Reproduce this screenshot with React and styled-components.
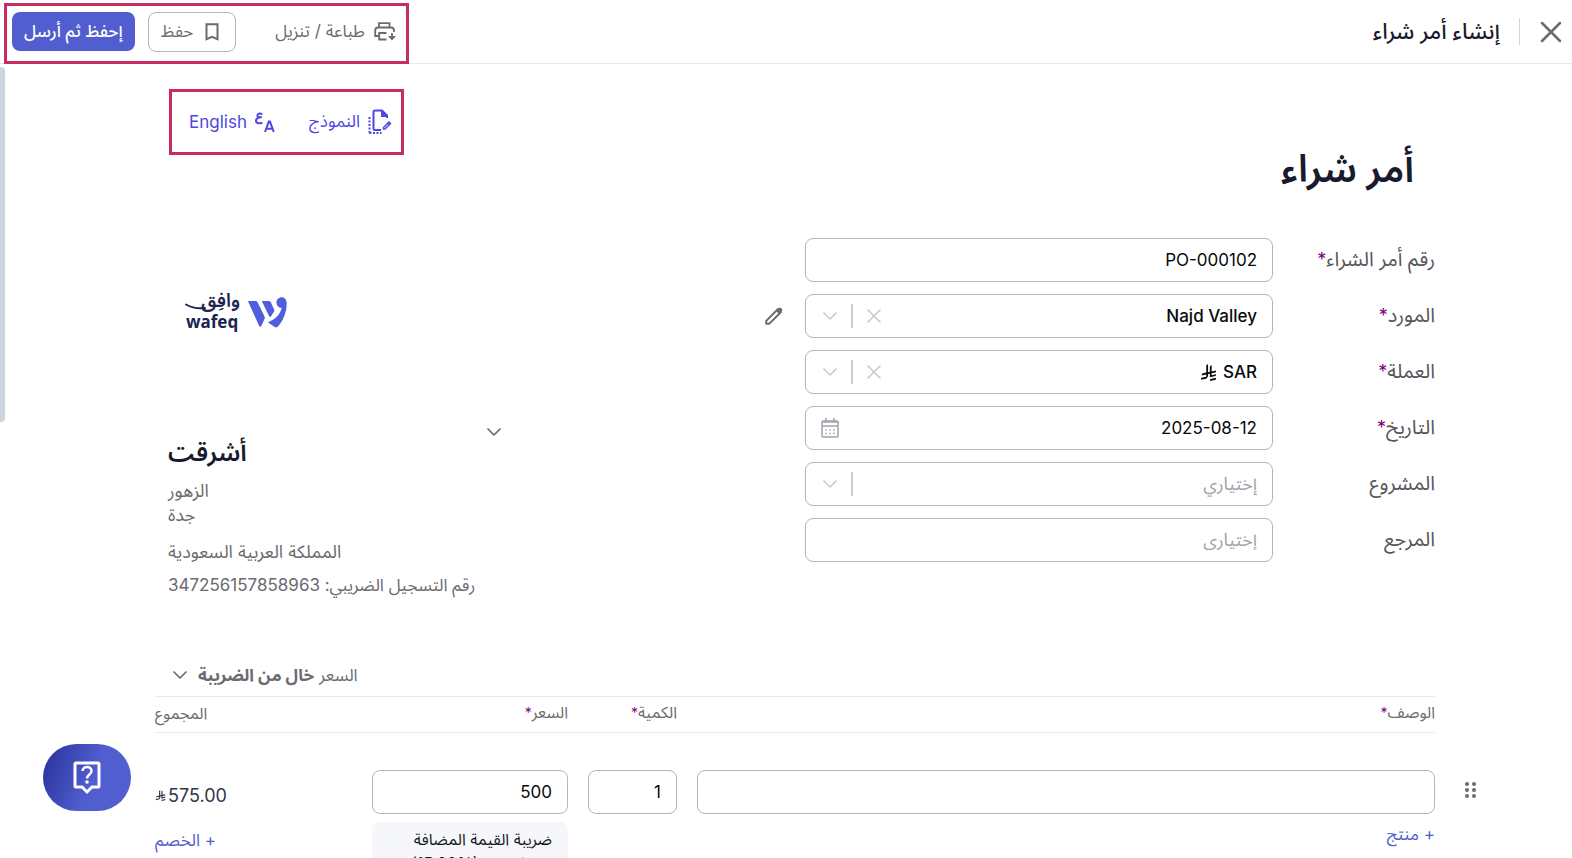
import React from 'react';
import styled, { createGlobalStyle } from 'styled-components';
import { X, ChevronDown } from 'lucide-react';

const GlobalStyle = createGlobalStyle`
  *, *::before, *::after {
    box-sizing: border-box;
  }

  body {
    margin: 0;
    background: #ffffff;
    color: #6b6b70;
    font-family: Inter, "Noto Sans Arabic", "Noto Sans", "DejaVu Sans", sans-serif;
    font-size: 16px;
  }

  button, input, select {
    font: inherit;
    color: inherit;
  }

  button {
    cursor: pointer;
  }
`;

const Screen = styled.div`
  height: 100vh;
  display: flex;
  flex-direction: column;
  overflow: hidden;
`;

// Top bar
const TopBar = styled.header`
  flex: none;
  display: flex;
  align-items: center;
  justify-content: space-between;
  height: 64px;
  padding: 0 3px 0 4px;
  border-bottom: 1px solid #e5e7eb;
`;

const TitleGroup = styled.div`
  display: flex;
  align-items: center;
  gap: 13px;
`;

const IconButton = styled.button`
  display: inline-flex;
  align-items: center;
  justify-content: center;
  padding: 0;
  border: none;
  background: none;
  color: ${({ $color }) => $color || '#6b6b70'};
`;

const Separator = styled.span`
  width: 1px;
  height: 27px;
  background: #d4d4d8;
`;

const PageTitle = styled.h1`
  margin: 0 6px 2px 0;
  font-size: 22px;
  line-height: 32px;
  font-weight: 500;
  color: #1a1a2e;
`;

const Highlight = styled.div`
  display: flex;
  align-items: center;
  border: 3px solid #c72c62;
`;

const TopActions = styled(Highlight)`
  gap: 13px;
  height: 61px;
  margin: 3px 0 -1px;
  padding: 0 10px 4px 5px;
`;

const TextButton = styled.button`
  display: inline-flex;
  align-items: center;
  gap: ${({ $gap }) => $gap || '8px'};
  padding: 0;
  border: none;
  background: none;
  font-size: 17px;
  color: ${({ $color }) => $color || '#6b6b70'};
`;

const PrintButton = styled(TextButton)`
  margin-left: 26px;
`;

const OutlineButton = styled(TextButton)`
  gap: 12px;
  height: 40px;
  padding: 0 16px 0 12px;
  border: 1px solid #b4b4be;
  border-radius: 8px;
`;

const PrimaryButton = styled.button`
  height: 39px;
  padding: 0 12px;
  border: none;
  border-radius: 8px;
  background: #505ecf;
  color: #ffffff;
  font-size: 17px;
  font-weight: 500;
`;

// Document
const Page = styled.main`
  flex: 1;
  overflow: hidden;
  padding: 25px 90px 0 155px;
`;

const DocumentTop = styled.div`
  display: flex;
  justify-content: space-between;
  align-items: flex-start;
  height: 149px;
  padding: 0 47px 0 14px;
`;

const DocumentTitle = styled.h2`
  margin: 47px 21px 0 0;
  font-size: 38px;
  line-height: 64px;
  font-weight: 600;
  color: #1a1a2e;
`;

const DocumentActions = styled(Highlight)`
  gap: 34px;
  height: 66px;
  padding: 0 9px 0 17px;
`;

const Columns = styled.div`
  display: flex;
  justify-content: space-between;
  padding: 0 47px 0 13px;
`;

const Form = styled.form`
  display: grid;
  gap: 12px;
  align-content: start;
`;

const FormRow = styled.div`
  display: grid;
  grid-template-columns: 162px 468px 40px;
  align-items: center;
  height: 44px;
`;

const Label = styled.label`
  font-size: 20px;
  color: #55555c;
`;

const Star = styled.span`
  font-size: ${({ $small }) => ($small ? '14px' : '18px')};
  color: #800080;
`;

const Control = styled.div`
  display: flex;
  align-items: center;
  height: 44px;
  padding: 0 15px 0 12px;
  border: 1px solid #b4b4be;
  border-radius: 8px;
  background: #ffffff;
  color: #09090b;
`;

const Field = styled.input`
  flex: 1;
  min-width: 0;
  width: 100%;
  padding: 0;
  border: none;
  outline: none;
  background: none;
  font-size: 17px;
  text-align: right;

  &::placeholder {
    color: #a1a1aa;
    font-size: 18px;
    opacity: 1;
  }
`;

const Choice = styled.select`
  flex: ${({ $fit }) => ($fit ? 'none' : 1)};
  field-sizing: ${({ $fit }) => ($fit ? 'content' : 'fixed')};
  min-width: 0;
  height: 40px;
  margin-left: ${({ $fit }) => ($fit ? '6px' : 0)};
  padding: 0;
  border: none;
  outline: none;
  background: none;
  appearance: none;
  font-size: ${({ $empty }) => ($empty ? '18px' : '17px')};
  line-height: 36px;
  font-weight: ${({ $empty }) => ($empty ? 400 : 500)};
  color: ${({ $empty }) => ($empty ? '#a1a1aa' : 'inherit')};
`;

const ControlEnd = styled.div`
  display: flex;
  align-items: center;
  gap: 9px;
  margin-right: auto;
  color: #cccccc;
`;

const ControlDivider = styled.span`
  width: 2px;
  height: 24px;
  background: #cccccc;
`;

const DateButton = styled(IconButton)`
  width: 24px;
`;

const EditButton = styled(IconButton)`
  justify-self: end;
`;

// Company
const Company = styled.section`
  display: flex;
  flex-direction: column;
  align-items: flex-start;
  direction: ltr;
  width: 338px;
`;

const Logo = styled.div`
  display: flex;
  align-items: center;
  gap: 8px;
  height: 60px;
  margin: 44px 0 0 18px;
`;

const CompanyBar = styled.div`
  align-self: stretch;
  display: flex;
  justify-content: flex-end;
  height: 20px;
  margin-top: 80px;
`;

const CompanyName = styled.h3`
  margin: 0;
  font-size: 25px;
  line-height: 20px;
  font-weight: 600;
  color: #1a1a2e;
`;

const CompanyLine = styled.p`
  margin: ${({ $gap }) => $gap || '0'} 0 0;
  font-size: ${({ $size }) => $size || '18px'};
  line-height: 24px;
  white-space: nowrap;
`;

// Items
const TaxMode = styled.div`
  display: flex;
  justify-content: flex-end;
  align-items: flex-start;
  height: 33px;
  margin-top: 66px;
  padding-left: 13px;
`;

const TaxWord = styled.span`
  line-height: 24px;
`;

const Items = styled.table`
  width: 100%;
  table-layout: fixed;
  border-collapse: collapse;
`;

const HeadCell = styled.th`
  height: 36px;
  padding: 0 0 4px ${({ $end }) => ($end ? 0 : '20px')};
  border-top: 1px solid #e9e9ec;
  border-bottom: 1px solid #e9e9ec;
  font-weight: 400;
  line-height: 24px;
  text-align: ${({ $end }) => ($end ? 'left' : 'right')};
`;

const Corner = styled.td`
  padding: 0;
`;

const Cell = styled.td`
  padding: 37px 0 0 ${({ $end }) => ($end ? 0 : '20px')};
  vertical-align: top;
`;

const HandleCell = styled.td`
  padding: 49px 6px 0 0;
  vertical-align: top;
`;

const Total = styled.div`
  direction: ltr;
  display: flex;
  align-items: center;
  gap: 2px;
  height: 50px;
  font-size: 18px;
  color: #34344a;
`;

const LinkButton = styled.button`
  display: block;
  margin: 8px 0 0;
  padding: 0;
  border: none;
  background: none;
  font-size: 17px;
  line-height: 24px;
  color: #505ecf;
`;

const DiscountButton = styled(LinkButton)`
  margin-right: auto;
`;

const TaxTag = styled.div`
  margin-top: 8px;
  padding: 5px 16px;
  border-radius: 8px;
  background: #f6f7fb;
  font-size: 16px;
  line-height: 24px;
  color: #18181b;
`;

const ScrollThumb = styled.div`
  position: fixed;
  left: 0;
  top: 67px;
  width: 5px;
  height: 355px;
  border-radius: 0 4px 4px 0;
  background: #cbd5e1;
`;

const HelpButton = styled.button`
  position: fixed;
  left: 43px;
  bottom: 47px;
  display: flex;
  align-items: center;
  justify-content: center;
  width: 88px;
  height: 67px;
  border: none;
  border-radius: 34px;
  background: linear-gradient(110deg, #27309a 0%, #505ecf 55%);
  color: #ffffff;
`;

const PrintIcon = () => (
  <svg width="22" height="19" viewBox="0 0 22 19" fill="none" stroke="currentColor" strokeWidth="1.8">
    <path d="M5 5V1.200h10.500V5M5 14H1.200V8.500A3 3 0 0 1 4 5.500h13a3 3 0 0 1 3 3V10M12.500 11H5.200v6.500h7.300M18 11v4" />
    <path d="M14 14h8l-4 4.500z" fill="currentColor" stroke="none" />
  </svg>
);

const BookmarkIcon = () => (
  <svg width="14" height="18" viewBox="0 0 14 18" fill="none" stroke="currentColor" strokeWidth="2">
    <path d="M1.500 1.200h11v15L7 13.800l-5.500 2.400z" />
  </svg>
);

const TemplateIcon = () => (
  <svg width="24" height="26" viewBox="0 0 24 26" fill="none" stroke="currentColor" strokeWidth="2">
    <path d="M13 21H7a1.500 1.500 0 0 1-1.500-1.500V3A1.500 1.500 0 0 1 7 1.500h7l5 5V9" />
    <path d="M13 1l7 7h-7z" fill="currentColor" stroke="none" />
    <path d="M1.500 8v16M1.500 24h12" strokeDasharray="2 1.500" />
    <path d="M15.500 18.500l4.500-4.500 1.500 1.500-4.500 4.500h-1.500z" strokeWidth="1.500" />
    <path d="M19 14l2-2 2.500 2.500-2 2z" fill="currentColor" stroke="none" />
  </svg>
);

const LanguageIcon = () => (
  <svg width="20" height="21" viewBox="0 0 21 22" fill="none" stroke="currentColor" strokeWidth="2.1">
    <path d="M7.500 2.500C5 .8 2.500 2 2.500 3.800c0 1.500 1.800 2 4.500 1.500C3.500 5.800 1 7.300 1 9.200c0 2.600 3.800 3.400 6.800 2" />
    <path d="M10.500 21l4-11h1.200l4 11M12 17.500h6.200" />
  </svg>
);

const PencilIcon = () => (
  <svg width="18" height="18" viewBox="0 0 18 18" fill="none" stroke="currentColor" strokeWidth="1.900">
    <path d="M1.200 16.800v-3L13 2l3 3L4.200 16.800z" strokeLinejoin="round" />
    <path d="M11 4l3-3q1-1 2 0l1 1q1 1 0 2l-3 3z" fill="currentColor" stroke="none" />
  </svg>
);

const CalendarIcon = () => (
  <svg width="18" height="20" viewBox="0 0 18 20" fill="none" stroke="currentColor" strokeWidth="1.500">
    <rect x="1" y="3" width="16" height="16" rx="1" />
    <path d="M1 4h16M1 8h16M5 0v4M13 0v4" />
    <path d="M4.200 12h10M4.200 15.500h10" strokeDasharray="1.500 2.500" />
  </svg>
);

const RiyalIcon = ({ size }) => (
  <svg width={size} height={size} viewBox="0 0 1124 1256" fill="currentColor">
    <path d="M699.620 1113.020c-20.060 44.480-33.320 92.750-38.400 143.370l424.510-90.240c20.060-44.470 33.310-92.750 38.400-143.370l-424.510 90.240z" />
    <path d="M1085.730 895.800c20.060-44.470 33.320-92.750 38.400-143.370l-330.680 70.330v-135.200l292.270-62.110c20.060-44.470 33.320-92.750 38.400-143.370l-330.680 70.270V66.130c-50.670 28.450-95.670 66.320-132.250 110.990v403.350l-132.250 28.110V0c-50.670 28.440-95.670 66.320-132.250 110.990v525.690l-295.910 62.880c-20.060 44.470-33.330 92.750-38.420 143.370l334.330-71.050v170.260l-358.300 76.140c-20.060 44.470-33.320 92.750-38.400 143.370l375.040-79.700c30.530-6.350 56.770-24.400 73.830-49.240l68.780-101.970c7.140-10.550 11.300-23.270 11.300-36.970v-149.980l132.250-28.110v270.400l424.530-90.280z" />
  </svg>
);

const HelpIcon = () => (
  <svg width="28" height="34" viewBox="0 0 28 34" fill="none" stroke="currentColor" strokeWidth="3">
    <path d="M3 2h22q1 0 1 1v22q0 1-1 1h-6l-5 5-5-5H3q-1 0-1-1V3q0-1 1-1z" />
    <path d="M9.500 10c.3-5.500 9-5.500 9 0 0 3.500-4.500 3.500-4.500 7.500" strokeWidth="2.500" />
    <circle cx="14" cy="21" r="1.800" fill="currentColor" stroke="none" />
  </svg>
);

const HandleIcon = () => (
  <svg width="11" height="16" viewBox="0 0 11 16" fill="currentColor">
    {[2, 8, 14].map((y) => (
      <React.Fragment key={y}>
        <circle cx="2" cy={y} r="2" />
        <circle cx="9" cy={y} r="2" />
      </React.Fragment>
    ))}
  </svg>
);

const Words = styled.svg`
  overflow: visible;
  fill: #1c2450;
`;

const Wordmark = () => (
  <Words width="54" height="44" viewBox="0 0 54 44">
    <text x="54" y="17" direction="rtl" fontSize="19" fontWeight="600">وافِق</text>
    <path d="M0 14.500q9 5 19 3.500" fill="none" stroke="#1c2450" strokeWidth="2" strokeLinecap="round" />
    <text x="0" y="38" fontSize="17" fontWeight="700" fontFamily="'Noto Sans', sans-serif">wafeq</text>
  </Words>
);

const LogoMark = () => (
  <svg width="39" height="31" viewBox="294 82 118 92" fill="#505edd">
    <path d="M294 93h23q4 0 6 4l21 43q2 4 0 8l-10 21q-3 5-6 0L295 96z" />
    <path d="M336 93h21q4 0 6 4l10 22q1 3 0 5l-9 15q-3 4-6 0L337 96z" />
    <path d="M380 98c0-9 7-16 16-16s15 7 15 19c0 27-11 54-28 71q-4 3-8 0l-18-12q-3-3 2-5c18-6 32-21 37-41-9 0-16-7-16-16z" />
  </svg>
);

const SelectControl = ({ id, value, symbol, clearable, empty }) => (
  <Control>
    <Choice id={id} defaultValue={value} $fit={symbol} $empty={empty}>
      <option value={value}>{value}</option>
    </Choice>
    {symbol && <RiyalIcon size={17} />}
    <ControlEnd>
      {clearable && (
        <IconButton type="button" aria-label="مسح" $color="#cccccc">
          <X size={24} strokeWidth={1.7} />
        </IconButton>
      )}
      <ControlDivider />
      <ChevronDown size={24} strokeWidth={1.7} />
    </ControlEnd>
  </Control>
);

const App = () => {
  return (
    <>
      <GlobalStyle />
      <Screen dir="rtl">
        <TopBar>
          <TitleGroup>
            <IconButton aria-label="إغلاق">
              <X size={36} strokeWidth={1.7} />
            </IconButton>
            <Separator />
            <PageTitle>إنشاء أمر شراء</PageTitle>
          </TitleGroup>
          <TopActions>
            <PrintButton $gap="9px">
              <PrintIcon />
              طباعة / تنزيل
            </PrintButton>
            <OutlineButton>
              <BookmarkIcon />
              حفظ
            </OutlineButton>
            <PrimaryButton>إحفظ ثم أرسل</PrimaryButton>
          </TopActions>
        </TopBar>

        <Page>
          <DocumentTop>
            <DocumentTitle>أمر شراء</DocumentTitle>
            <DocumentActions>
              <TextButton $color="#4f46e5">
                <TemplateIcon />
                النموذج
              </TextButton>
              <TextButton $color="#4f46e5">
                <LanguageIcon />
                English
              </TextButton>
            </DocumentActions>
          </DocumentTop>

          <Columns>
            <Form>
              <FormRow>
                <Label htmlFor="number">رقم أمر الشراء<Star>*</Star></Label>
                <Control><Field id="number" defaultValue="PO-000102" /></Control>
              </FormRow>
              <FormRow>
                <Label htmlFor="supplier">المورد<Star>*</Star></Label>
                <SelectControl id="supplier" value="Najd Valley" clearable />
                <EditButton type="button" aria-label="تعديل المورد">
                  <PencilIcon />
                </EditButton>
              </FormRow>
              <FormRow>
                <Label htmlFor="currency">العملة<Star>*</Star></Label>
                <SelectControl id="currency" value="SAR" symbol clearable />
              </FormRow>
              <FormRow>
                <Label htmlFor="date">التاريخ<Star>*</Star></Label>
                <Control>
                  <Field id="date" dir="ltr" defaultValue="2025-08-12" />
                  <DateButton type="button" aria-label="اختيار التاريخ" $color="#a1a1aa">
                    <CalendarIcon />
                  </DateButton>
                </Control>
              </FormRow>
              <FormRow>
                <Label htmlFor="project">المشروع</Label>
                <SelectControl id="project" value="إختياري" empty />
              </FormRow>
              <FormRow>
                <Label htmlFor="reference">المرجع</Label>
                <Control><Field id="reference" placeholder="إختيارى" /></Control>
              </FormRow>
            </Form>

            <Company>
              <Logo>
                <Wordmark />
                <LogoMark />
              </Logo>
              <CompanyBar>
                <IconButton aria-label="اختيار الشركة">
                  <ChevronDown size={24} strokeWidth={1.7} />
                </IconButton>
              </CompanyBar>
              <CompanyName>أشرقت</CompanyName>
              <CompanyLine $gap="17px">الزهور</CompanyLine>
              <CompanyLine>جدة</CompanyLine>
              <CompanyLine $gap="13px">المملكة العربية السعودية</CompanyLine>
              <CompanyLine $gap="9px" $size="17px" dir="rtl">رقم التسجيل الضريبي: 347256157858963</CompanyLine>
            </Company>
          </Columns>

          <TaxMode>
            <TextButton $gap="6px">
              <TaxWord>السعر <b>خال من الضريبة</b></TaxWord>
              <ChevronDown size={24} strokeWidth={1.7} />
            </TextButton>
          </TaxMode>

          <Items>
            <colgroup>
              <col width="47" />
              <col />
              <col width="109" />
              <col width="216" />
              <col width="197" />
            </colgroup>
            <thead>
              <tr>
                <Corner />
                <HeadCell>الوصف<Star $small>*</Star></HeadCell>
                <HeadCell>الكمية<Star $small>*</Star></HeadCell>
                <HeadCell>السعر<Star $small>*</Star></HeadCell>
                <HeadCell $end>المجموع</HeadCell>
              </tr>
            </thead>
            <tbody>
              <tr>
                <HandleCell>
                  <IconButton aria-label="ترتيب"><HandleIcon /></IconButton>
                </HandleCell>
                <Cell>
                  <Control><Field aria-label="الوصف" /></Control>
                  <LinkButton>+ منتج</LinkButton>
                </Cell>
                <Cell>
                  <Control><Field aria-label="الكمية" defaultValue="1" /></Control>
                </Cell>
                <Cell>
                  <Control><Field aria-label="السعر" defaultValue="500" /></Control>
                  <TaxTag>ضريبة القيمة المضافة المدفوعات (%15.00)</TaxTag>
                </Cell>
                <Cell $end>
                  <Total><RiyalIcon size={11} />575.00</Total>
                  <DiscountButton>+ الخصم</DiscountButton>
                </Cell>
              </tr>
            </tbody>
          </Items>
        </Page>

        <ScrollThumb />
        <HelpButton aria-label="مساعدة">
          <HelpIcon />
        </HelpButton>
      </Screen>
    </>
  );
};

export default App;
